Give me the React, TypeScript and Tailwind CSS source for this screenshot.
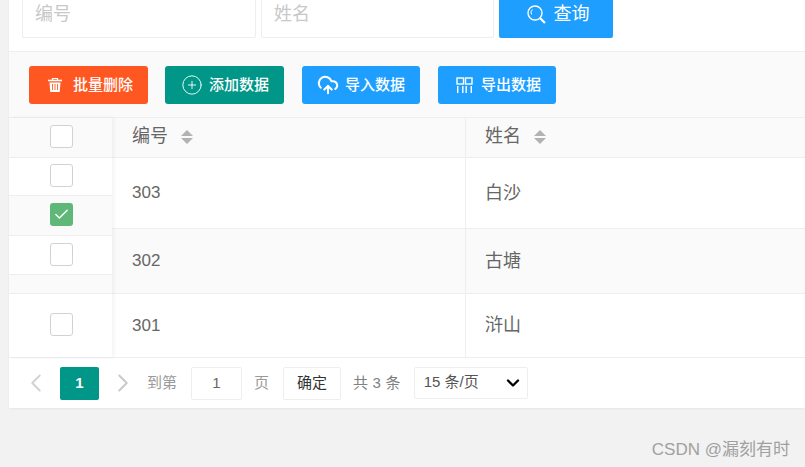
import { Check, ChevronDown, ChevronLeft, ChevronRight, CirclePlus, CloudUpload } from "lucide-react";
import type { ReactNode } from "react";

const font = "font-['Liberation_Sans','Noto_Sans_CJK_SC',sans-serif]";

const CheckBox = ({ checked = false }: { checked?: boolean }) =>
  checked ? (
    <div className="w-[23px] h-[23px] rounded-[3px] bg-[#5fb878] flex items-center justify-center">
      <Check className="w-[17px] h-[17px] text-white" strokeWidth={2} />
    </div>
  ) : (
    <div className="w-[23px] h-[23px] rounded-[3px] bg-white border border-[#d2d2d2]" />
  );

const SearchIcon = () => (
  <svg width="19" height="19" viewBox="0 0 19 19" fill="none" stroke="white">
    <circle cx="8" cy="8" r="7" strokeWidth="1.4" />
    <path d="M13 13l5 5" strokeWidth="2.2" />
    <path d="M4.5 9.5a4 4 0 0 1 1-5" strokeWidth="1" />
  </svg>
);

const TrashIcon = () => (
  <svg width="16" height="16" viewBox="0 0 16 16" fill="none" stroke="white">
    <path d="M1 3.5h14" strokeWidth="1.6" />
    <path d="M5.5 3V1.5h5V3" strokeWidth="1.2" />
    <path d="M2.5 5.5h11l-.8 9.5H3.3z" fill="white" stroke="none" />
    <path d="M5.5 7v6M8 7v6M10.5 7v6" stroke="#ff5722" strokeWidth="0.9" />
  </svg>
);

const ExportIcon = () => (
  <svg width="17" height="17" viewBox="0 0 17 17" fill="none" stroke="white" strokeWidth="1.4">
    <rect x="1" y="1" width="6.5" height="6" />
    <rect x="9.5" y="1" width="6.5" height="6" />
    <path d="M1.7 9v7M6.8 9v7M10.2 9v7M15.3 9v7" />
  </svg>
);

const ToolButton = ({ className, icon, label }: { className: string; icon: ReactNode; label: string }) => (
  <button className={`${className} h-[38px] rounded-[3px] flex items-center text-white text-[15px] font-medium`}>
    {icon}
    <span>{label}</span>
  </button>
);

const SortArrows = () => (
  <span className="flex flex-col gap-[2px] ml-[13px]">
    <span className="w-0 h-0 border-x-[6px] border-x-transparent border-b-[6px] border-b-[#b2b2b2]" />
    <span className="w-0 h-0 border-x-[6px] border-x-transparent border-t-[6px] border-t-[#b2b2b2]" />
  </span>
);

const rows = [
  { id: "303", name: "白沙", h: "h-[71px]", bg: "bg-white" },
  { id: "302", name: "古塘", h: "h-[65px]", bg: "bg-[#fafafa]" },
  { id: "301", name: "浒山", h: "h-[63px]", bg: "bg-white" },
];

const fixedRows = [
  { h: "h-[38px]", bg: "bg-white", box: true, checked: false },
  { h: "h-[40px]", bg: "bg-[#fafafa]", box: true, checked: true },
  { h: "h-[39px]", bg: "bg-white", box: true, checked: false },
  { h: "h-[19px]", bg: "bg-[#fafafa]", box: false, checked: false },
  { h: "h-[63px]", bg: "bg-white", box: true, checked: false },
];

export default function App() {
  return (
    <div className={`${font} h-[467px] w-[805px] overflow-hidden bg-[#f2f2f2] pl-[9px] relative`}>
      <div className="bg-white shadow-[0_1px_2px_rgba(0,0,0,0.05)]">
        {/* Search */}
        <div className="h-[52px] border-b border-[#eeeeee] pl-[13px] flex gap-[5px] overflow-hidden">
          <div className="w-[234px] h-[48px] -mt-[10px] border border-[#eeeeee] rounded-[2px] pl-[12px] text-[18px] text-[#c8c8c8] flex items-center">编号</div>
          <div className="w-[233px] h-[48px] -mt-[10px] border border-[#eeeeee] rounded-[2px] pl-[12px] text-[18px] text-[#c8c8c8] flex items-center">姓名</div>
          <button className="w-[114px] h-[48px] -mt-[10px] bg-[#1e9fff] rounded-[2px] pl-[4px] text-white text-[18px] flex items-center justify-center gap-[8px]">
            <SearchIcon />
            查询
          </button>
        </div>

        {/* Toolbar */}
        <div className="h-[66px] bg-[#fafafa] border-b border-[#eeeeee] pl-[20px] pt-[14px] flex">
          <ToolButton className="w-[119px] bg-[#ff5722] pl-[18px] gap-[10px]" icon={<TrashIcon />} label="批量删除" />
          <ToolButton className="w-[119px] ml-[17px] bg-[#009688] pl-[16px] gap-[6px]" icon={<CirclePlus className="w-[22px] h-[22px]" strokeWidth={1} />} label="添加数据" />
          <ToolButton className="w-[118px] ml-[18px] bg-[#1e9fff] pl-[15px] gap-[6px]" icon={<CloudUpload className="w-[22px] h-[22px]" strokeWidth={2.2} />} label="导入数据" />
          <ToolButton className="w-[118px] ml-[18px] bg-[#1e9fff] pl-[18px] gap-[8px]" icon={<ExportIcon />} label="导出数据" />
        </div>

        {/* Table */}
        <div className="flex border-b border-[#eeeeee]">
          <div className="w-[103px] shrink-0 z-10 shadow-[2px_0_4px_rgba(0,0,0,0.05)]">
            <div className="h-[40px] bg-[#fafafa] border-b border-[#eeeeee] flex items-center justify-center pl-[1px] pb-[2px]">
              <CheckBox />
            </div>
            {fixedRows.map((row, i) => (
              <div key={i} className={`${row.h} ${row.bg} ${i < fixedRows.length - 1 ? "border-b border-[#eeeeee]" : ""} flex items-center justify-center pl-[1px] pb-[2px]`}>
                {row.box && <CheckBox checked={row.checked} />}
              </div>
            ))}
          </div>
          <div className="flex-1 min-w-0">
            <div className="h-[40px] bg-[#fafafa] border-b border-[#eeeeee] flex text-[#666666] text-[18px]">
              <div className="w-[354px] pl-[20px] pb-[2px] border-r border-[#eeeeee] flex items-center">
                编号
                <SortArrows />
              </div>
              <div className="flex-1 pl-[19px] pb-[2px] flex items-center">
                姓名
                <SortArrows />
              </div>
            </div>
            {rows.map((row, i) => (
              <div key={row.id} className={`${row.h} ${row.bg} ${i < rows.length - 1 ? "border-b border-[#eeeeee]" : ""} flex text-[#666666] text-[18px]`}>
                <div className="w-[354px] pl-[20px] border-r border-[#eeeeee] flex items-center text-[17px]">{row.id}</div>
                <div className="flex-1 pl-[19px] flex items-center">{row.name}</div>
              </div>
            ))}
          </div>
        </div>

        {/* Pagination */}
        <div className="h-[50px] flex items-center pl-[12px] text-[15px] text-[#999999]">
          <ChevronLeft className="w-[30px] h-[30px] text-[#d2d2d2]" strokeWidth={1.5} />
          <div className="w-[39px] h-[33px] ml-[9px] rounded-[2px] bg-[#009688] text-white font-bold flex items-center justify-center">1</div>
          <ChevronRight className="w-[30px] h-[30px] ml-[9px] text-[#c8c8c8]" strokeWidth={1.5} />
          <span className="ml-[9px]">到第</span>
          <div className="w-[51px] h-[33px] ml-[14px] border border-[#eeeeee] rounded-[2px] text-[#666666] flex items-center justify-center">1</div>
          <span className="ml-[12px]">页</span>
          <div className="w-[58px] h-[33px] ml-[14px] border border-[#eeeeee] rounded-[2px] text-[#333333] flex items-center justify-center">确定</div>
          <span className="ml-[12px] text-[#808080] tracking-[0.2px]">共 3 条</span>
          <div className="w-[114px] h-[32px] ml-[13px] -mt-[1px] border border-[#eeeeee] rounded-[2px] text-[#555555] flex items-center justify-between pl-[9px] pr-[4px]">
            15 条/页
            <ChevronDown className="w-[20px] h-[20px] text-black" strokeWidth={2.8} />
          </div>
        </div>
      </div>

      <div className="absolute right-[15px] bottom-[5px] text-[17px] text-[#a0a0a0]">CSDN @漏刻有时</div>
    </div>
  );
}
